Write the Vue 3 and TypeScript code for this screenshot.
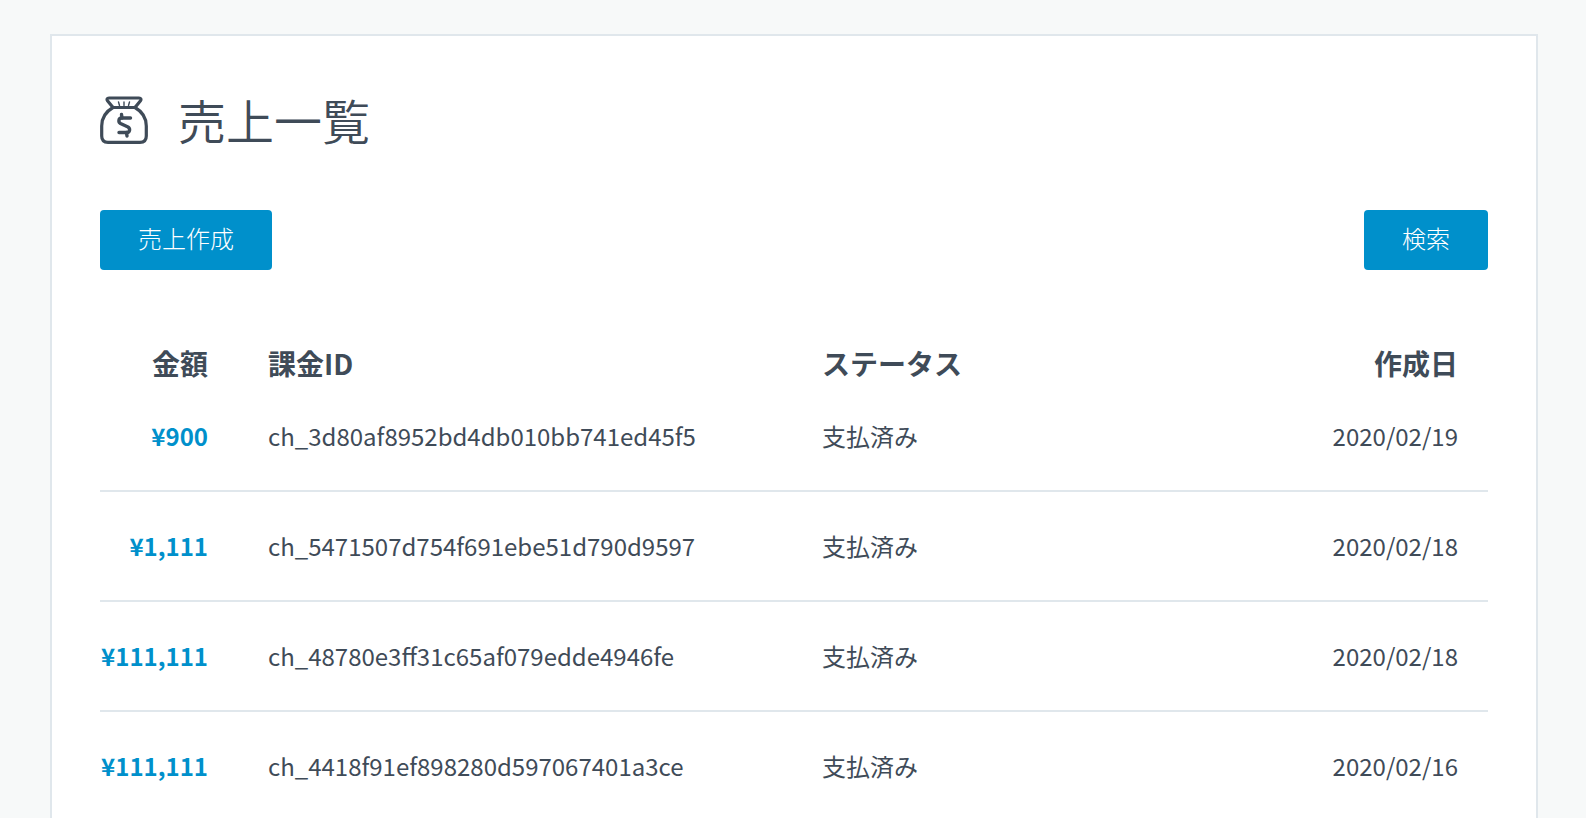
<script setup lang="ts">
interface Sale { amount: string; id: string; status: string; date: string }
const sales: Sale[] = [
  { amount: '¥900', id: 'ch_3d80af8952bd4db010bb741ed45f5', status: '支払済み', date: '2020/02/19' },
  { amount: '¥1,111', id: 'ch_5471507d754f691ebe51d790d9597', status: '支払済み', date: '2020/02/18' },
  { amount: '¥111,111', id: 'ch_48780e3ff31c65af079edde4946fe', status: '支払済み', date: '2020/02/18' },
  { amount: '¥111,111', id: 'ch_4418f91ef898280d597067401a3ce', status: '支払済み', date: '2020/02/16' },
]
</script>

<template>
  <main class="page">
    <section class="card">
      <header class="title">
        <svg class="bag" viewBox="0 0 48 48" width="48" height="48" fill="none" stroke="#3f4b58" stroke-width="3.200" stroke-linecap="round" stroke-linejoin="round">
          <path d="M9 2H39C41 2 41.500 3.500 40.500 4.800L35 11.500H13L7.500 4.800C6.500 3.500 7 2 9 2Z" />
          <path d="M13 11.500C6 15.500 1.700 22 1.700 30V40C1.700 44 4 46.300 8 46.300H40C44 46.300 46.300 44 46.300 40V30C46.300 22 42 15.500 35 11.500" />
          <path d="M18.500 6L19.500 9.500M24 6V9.500M29.500 6L28.500 9.500" stroke-width="1.400" />
          <path d="M30.500 22H21.500C18.500 22 18 26 20.500 27.500L28 31C30.500 32.500 30 36.500 27 36.500H19" stroke-width="3.400" />
          <path d="M21.500 18.500L22 22M26.500 36.500L27 40" stroke-width="3.400" />
        </svg>
        <h1>売上一覧</h1>
      </header>
      <div class="actions">
        <button type="button"><span>売上作成</span></button>
        <button type="button"><span>検索</span></button>
      </div>
      <table>
        <colgroup>
          <col class="c-amount" />
          <col class="c-id" />
          <col />
          <col class="c-date" />
        </colgroup>
        <thead>
          <tr>
            <th class="amount">金額</th>
            <th class="left">課金ID</th>
            <th class="left">ステータス</th>
            <th class="date">作成日</th>
          </tr>
        </thead>
        <tbody>
          <tr v-for="(s, i) in sales" :key="i">
            <td class="amount value">{{ s.amount }}</td>
            <td>{{ s.id }}</td>
            <td>{{ s.status }}</td>
            <td class="date">{{ s.date }}</td>
          </tr>
        </tbody>
      </table>
    </section>
  </main>
</template>

<style>
html, body { margin: 0; height: 100%; overflow: hidden; background: #f7f9f9; }
</style>

<style scoped>
.page {
  padding: 34px 48px 0 50px;
  font-family: "Noto Sans CJK JP", "Noto Sans", sans-serif;
  color: #3f4b58;
}
.card {
  background: #fff;
  border: 2px solid #e0e7ec;
  padding: 60px 48px 48px;
}
.title { display: flex; align-items: center; gap: 30px; height: 50px; }
.bag { flex: none; margin-top: -2px; }
h1 { margin: -5px 0 0; font-size: 48px; font-weight: 350; line-height: 50px; }
.actions { display: flex; justify-content: space-between; margin-top: 64px; }
button {
  height: 60px;
  padding: 0 38px 6px;
  border: 0;
  border-radius: 4px;
  background: #0090cb;
  color: #fff;
  font: 300 24px "Noto Sans CJK JP", sans-serif;
}
table { width: 100%; margin-top: 60px; border-collapse: collapse; table-layout: fixed; font-size: 24px; }
.c-amount { width: 138px; }
.c-id { width: 554px; }
.c-date { width: 300px; }
th { height: 37px; line-height: 37px; padding: 15px 30px 0; font-weight: 700; font-size: 28px; }
td { height: 106px; padding: 0 30px 2px; border-bottom: 2px solid #e0e7ec; font-weight: 400; white-space: nowrap; }
.left { text-align: left; }
.amount { text-align: right; padding-left: 0; }
.date { text-align: right; }
td.value { color: #0090cb; font-weight: 700; }
</style>
